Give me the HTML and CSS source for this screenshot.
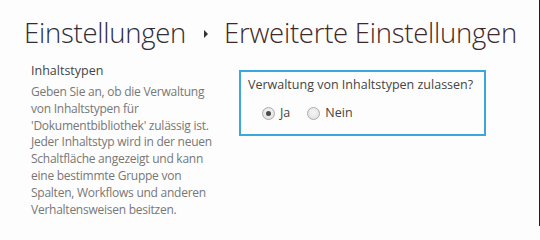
FILE: index.html
```html
<!DOCTYPE html>
<html lang="de">
<head>
<meta charset="utf-8">
<title>Erweiterte Einstellungen</title>
<link rel="stylesheet" href="styles.css">
</head>
<body>
<div class="page">
  <h1 class="title">
    <span class="crumb">Einstellungen</span>
    <span class="sep"></span>
    <span class="current">Erweiterte Einstellungen</span>
  </h1>
  <div class="section">
    <div class="desc">
      <h3 class="heading">Inhaltstypen</h3>
      <p class="text">Geben Sie an, ob die Verwaltung von Inhaltstypen für 'Dokumentbibliothek' zulässig ist. Jeder Inhaltstyp wird in der neuen Schaltfläche angezeigt und kann eine bestimmte Gruppe von Spalten, Workflows und anderen Verhaltensweisen besitzen.</p>
    </div>
    <div class="control">
      <div class="box">
        <div class="question">Verwaltung von Inhaltstypen zulassen?</div>
        <div class="options">
          <label class="option"><span class="radio checked"></span><span>Ja</span></label>
          <label class="option"><span class="radio"></span><span>Nein</span></label>
        </div>
      </div>
    </div>
  </div>
</div>
</body>
</html>
```

FILE: styles.css
```css
html, body {
  margin: 0;
  padding: 0;
  height: 100%;
}
body {
  background: #fdfdfd;
  font-family: "Open Sans", "Noto Sans", sans-serif;
  color: #444;
  overflow: hidden;
}
.page {
  box-sizing: border-box;
  height: 226px;
  border-right: 1px solid #1e1e1e;
}
.title {
  margin: 0;
  box-sizing: border-box;
  height: 60px;
  padding: 15px 0 9px 24px;
  font-weight: 300;
  font-size: 27.5px;
  letter-spacing: -0.25px;
  line-height: 36px;
  white-space: nowrap;
  display: flex;
  align-items: center;
}
.crumb { color: #2e2e38; }
.current { color: #40282a; }
.sep {
  display: inline-block;
  width: 0;
  height: 0;
  border-top: 4px solid transparent;
  border-bottom: 4px solid transparent;
  border-left: 4px solid #333;
  margin: 2px 16px 0 18px;
}
.section {
  display: flex;
  padding-left: 31px;
}
.desc {
  width: 182px;
}
.heading {
  margin: 2px 0 0 0;
  font-weight: 400;
  font-size: 12.5px;
  line-height: 18px;
  color: #444;
}
.text {
  margin: 4px 0 0 0;
  font-size: 12px;
  letter-spacing: -0.25px;
  line-height: 16.8px;
  color: #777;
}
.control {
  margin-left: 26px;
  padding-top: 10px;
}
.box {
  box-sizing: border-box;
  width: 247px;
  height: 66px;
  border: 2px solid #3aa8dc;
  padding: 4px 0 0 7px;
}
.question {
  font-size: 12.5px;
  line-height: 18px;
  color: #444;
}
.options {
  display: flex;
  gap: 17px;
  padding: 10px 0 0 14px;
}
.option {
  display: flex;
  align-items: center;
  gap: 5px;
  font-size: 12.5px;
  line-height: 18px;
  color: #444;
}
.radio {
  box-sizing: border-box;
  width: 13px;
  height: 13px;
  border-radius: 50%;
  border: 1px solid #ababab;
  background: radial-gradient(circle at 50% 40%, #f6f6f6 0%, #dcdcdc 100%);
  position: relative;
}
.radio.checked::after {
  content: "";
  position: absolute;
  left: 3px;
  top: 3px;
  width: 5px;
  height: 5px;
  border-radius: 50%;
  background: #4a4a4a;
}
```
